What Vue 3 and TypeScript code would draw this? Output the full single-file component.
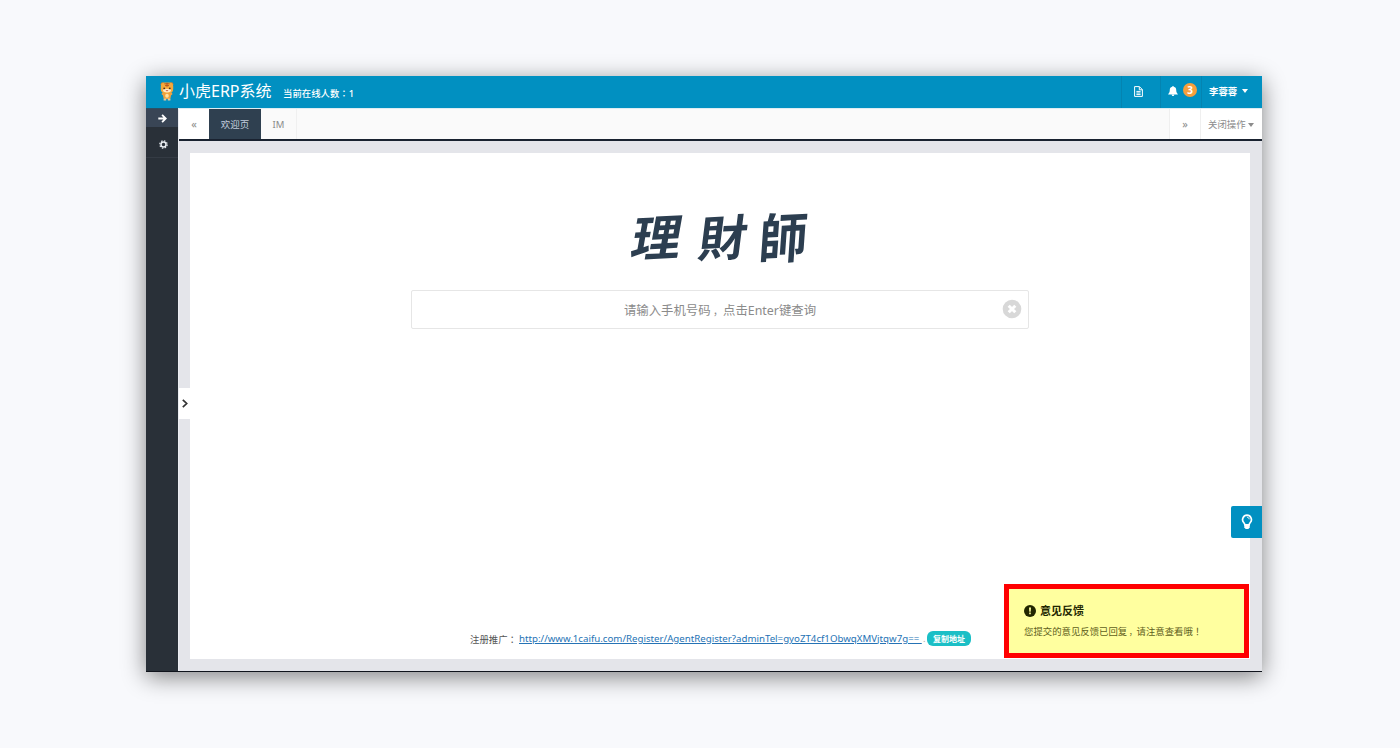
<script setup lang="ts">
import { ref } from 'vue'

interface Tab { label: string; active: boolean }

const tabs = ref<Tab[]>([
  { label: '欢迎页', active: true },
  { label: 'IM', active: false },
])
const notices = ref<number>(3)
const online = ref<number>(1)
const keyword = ref<string>('')
const link = 'http://www.1caifu.com/Register/AgentRegister?adminTel=gyoZT4cf1ObwqXMVjtqw7g=='
</script>

<template>
  <div class="page">
    <div class="window">
      <header class="header">
        <svg class="mascot" viewBox="0 0 14 20">
          <circle cx="2.600" cy="3.200" r="1.900" fill="#d9822b" />
          <circle cx="11.400" cy="3.200" r="1.900" fill="#d9822b" />
          <path d="M2.200 12l2.800 2.500M11.800 12l-2.800 2.500" stroke="#eda54a" stroke-width="2.400" />
          <rect x="3.200" y="10.500" width="7.600" height="7.500" rx="2" fill="#efa03c" />
          <rect x=".8" y="1.600" width="12.400" height="10.400" rx="4" fill="#f5a93a" />
          <path d="M4.400 2.800h5.200M5 4.600h4M7 1.800v4" stroke="#b0501d" stroke-width=".9" />
          <ellipse cx="7" cy="9.600" rx="4" ry="1.800" fill="#ffeccb" />
          <circle cx="4.200" cy="7.300" r=".9" fill="#4a2c1c" />
          <circle cx="9.800" cy="7.300" r=".9" fill="#4a2c1c" />
          <path d="M5.800 9.300q1.200 1.200 2.400 0" stroke="#c33b26" stroke-width=".8" fill="none" />
          <ellipse cx="7" cy="14.800" rx="1.800" ry="2" fill="#ffe0a0" />
          <path d="M3.600 18.500h2.600M7.800 18.500h2.600" stroke="#e5c79c" stroke-width="1.800" />
        </svg>
        <h1 class="brand">小虎ERP系统</h1>
        <span class="online">当前在线人数<span class="mid">：</span>{{ online }}</span>
        <div class="tools">
          <a class="tool doc">
            <svg width="9" height="11" viewBox="0 0 9 11" fill="none" stroke="#fff">
              <path d="M.6.6h4.800l3 3v6.800H.6zM5.300.8v3h3M2.400 5.400h4.200M2.400 7h4.200M2.400 8.600h4.200" stroke-width="1" />
            </svg>
          </a>
          <a class="tool bell">
            <svg width="10" height="10" viewBox="0 0 10 10" fill="#fff">
              <path d="M5 0c.5 0 .8.3.8.8C7.400 1.100 8.200 2.300 8.200 3.800c0 2.100.5 3.200 1.600 4.200v.5H.2V8c1.100-1 1.600-2.100 1.600-4.200 0-1.500.8-2.700 2.400-3C4.200.3 4.500 0 5 0zM3.700 8.800h2.600C6.200 9.600 5.700 10 5 10s-1.200-.4-1.300-1.200z" />
            </svg>
            <span class="badge">{{ notices }}</span>
          </a>
          <a class="tool user">李蓉蓉<i class="caret" /></a>
        </div>
      </header>
      <div class="body">
        <aside class="sidebar">
          <div class="side-item toggle">
            <svg width="9" height="9" viewBox="0 0 9 9" fill="none" stroke="#fff" stroke-width="1.8">
              <path d="M.3 4.500h7M4.100.8l3.700 3.700-3.700 3.700" />
            </svg>
          </div>
          <div class="side-item gear">
            <svg width="9" height="9" viewBox="-4.500 -4.500 9 9" fill="none" stroke="#e8ecf0">
              <circle r="3.700" stroke-width="1.200" stroke-dasharray="1.500 1.406" />
              <circle r="2.500" stroke-width="1.500" />
            </svg>
          </div>
        </aside>
        <main class="main">
          <nav class="tabs">
            <span class="nav-arrow">«</span>
            <span v-for="tab in tabs" :key="tab.label" class="tab" :class="{ active: tab.active }">{{ tab.label }}</span>
            <span class="nav-arrow right">»</span>
            <span class="close-menu">关闭操作<i class="caret" /></span>
          </nav>
          <section class="content">
            <div class="panel">
              <div class="logo"><span class="g1">理</span><span class="g2">財</span><span class="g3">師</span></div>
              <div class="search">
                <span v-if="!keyword">请输入手机号码<span class="comma">，</span>点击Enter键查询</span>
                <svg class="clear" width="20" height="20" viewBox="0 0 20 20">
                  <circle cx="10" cy="10" r="9.300" fill="#d8d8d8" />
                  <path d="M6.700 6.700l6.600 6.600M13.300 6.700l-6.600 6.600" stroke="#fff" stroke-width="3" />
                </svg>
              </div>
              <div class="promo">
                <span class="promo-label">注册推广<span class="mid">：</span></span>
                <a class="url">{{ link }}&nbsp;</a><span class="dot">.</span>
                <button class="copy">复制地址</button>
              </div>
            </div>
            <div class="drawer">
              <svg width="6" height="9" viewBox="0 0 6 9" fill="none" stroke="#333" stroke-width="1.700"><path d="M.8.8l3.900 3.700L.8 8.200" /></svg>
            </div>
            <div class="hint">
              <svg width="12" height="16" viewBox="0 0 12 16">
                <path d="M6 1.200a4.400 4.400 0 0 0-3.300 7.300c.7.800 1.100 1.400 1.200 2.300h4.200c.1-.9.500-1.500 1.200-2.300A4.400 4.400 0 0 0 6 1.200z" fill="none" stroke="#fff" stroke-width="1.700" />
                <path d="M6.200 3.300c1.200.1 1.900.8 2 2" fill="none" stroke="#fff" stroke-width="1" />
                <path d="M3.300 10h5.400v3.500L7.300 15H4.700l-1.400-1.500z" fill="#fff" />
              </svg>
            </div>
            <div class="toast">
              <div class="toast-title">
                <svg width="12" height="12" viewBox="0 0 12 12"><circle cx="6" cy="6" r="6" fill="#222600" /><path d="M5 2.400h2l-.3 4.300H5.300zM5.200 7.600h1.600v1.700H5.200z" fill="#ffff9f" /></svg>
                <strong>意见反馈</strong>
              </div>
              <p>您提交的意见反馈已回复<span class="comma">，</span>请注意查看哦<span class="mid">！</span></p>
            </div>
          </section>
        </main>
      </div>
    </div>
  </div>
</template>

<style>
body { margin: 0; background: #f8f9fc; }
</style>

<style scoped>
* { box-sizing: border-box; }
.page {
  height: 748px; padding: 76px 138px 0 146px; background: #f8f9fc; overflow: hidden;
  font-family: "Noto Sans", "Noto Sans CJK SC", sans-serif; font-size: 9.4px;
}
.mid { font-family: "Noto Sans CJK TC", sans-serif; }
.comma { font-size: .8em; padding-left: .25em; }
.window {
  width: 1116px; height: 596px; display: flex; flex-direction: column;
  border-bottom: 1px solid #10141c; box-shadow: 0 5px 22px rgba(0, 0, 0, .48);
}
.header { height: 32px; flex: none; display: flex; align-items: center; background: #0190c1; color: #fff; padding-left: 14px; }
.mascot { width: 14px; height: 20px; margin-right: 5px; position: relative; top: -1px; }
.brand { margin: 0; width: 104px; font-size: 16px; line-height: 30px; height: 32px; font-weight: 400; white-space: nowrap; }
.online { line-height: 32px; font-weight: 500; padding-top: 2px; white-space: nowrap; }
.tools { display: flex; height: 32px; margin-left: auto; }
.tool { display: flex; align-items: center; border-left: 1px solid #0484b1; }
.doc { width: 39px; padding: 0 0 2px 12px; }
.bell { width: 41px; padding: 0 0 2px 7px; }
.badge {
  width: 14px; height: 14px; margin: -3px 0 0 5px; border-radius: 50%; background: #f89f3c;
  font-size: 10px; line-height: 14px; text-align: center; font-weight: 700;
}
.user { width: 61px; padding: 0 0 2px 7px; font-weight: 700; }
.caret { display: block; border: 3px solid transparent; border-top: 4px solid currentColor; border-bottom: 0; margin-left: 5px; }
.body { flex: 1; display: flex; min-height: 0; }
.sidebar { width: 32px; flex: none; background: #293038; }
.side-item { display: flex; align-items: center; justify-content: center; }
.toggle { height: 19px; background: #394555; border-top: 1px solid #2b5165; }
.gear { height: 31px; padding: 5px 0 0 3px; border-bottom: 1px solid #343b44; }
.main { flex: 1; min-width: 0; display: flex; flex-direction: column; border-left: 1px solid #eceef2; }
.tabs { height: 33px; flex: none; display: flex; border-top: 1px solid #dcecf2; border-bottom: 2px solid #192230; background: #fafafa; color: #8c8c8c; line-height: 31px; }
.nav-arrow { width: 30px; text-align: center; background: #fff; font-size: 11px; line-height: 29px; }
.tab { width: 36px; text-align: center; border-right: 1px solid #f0f0f0; font-size: 9.500px; }
.tab.active { width: 52px; background: #2f4050; color: #c1cddd; border: 0; }
.nav-arrow.right { margin-left: auto; width: 31px; border-left: 1px solid #efefef; }
.close-menu { width: 62px; padding: 1px 0 0 7px; border-left: 1px solid #efefef; background: #fff; display: flex; align-items: center; white-space: nowrap; }
.close-menu .caret { margin-left: 2px; }
.content { position: relative; flex: 1; padding: 12px 12px 12px 11px; background: #e4e5ea; }
.panel { height: 506px; background: #fff; display: flex; flex-direction: column; align-items: center; }
.logo {
  height: 73px; margin-top: 49px; width: 180px; display: flex; justify-content: space-between;
  font-family: "Noto Sans CJK TC", sans-serif; font-weight: 700; font-size: 51px; line-height: 66px; color: #2c3e50;
}
.logo span { display: block; width: 51px; height: 66px; }
.g1 { transform: translateX(2px) skewX(-13deg) rotate(-3deg) scale(.97); }
.g2 { transform: translateX(3px) skewX(-10deg) rotate(-3deg) scale(.95, .96); }
.g3 { transform: translateX(-1px) skewX(-7deg) rotate(-3deg) scale(.95, 1.060); }
.search {
  width: 618px; height: 39px; margin-top: 15px; border: 1px solid #e6e6e6; border-radius: 2px; position: relative;
  display: flex; align-items: center; justify-content: center; font-size: 12.400px; color: #8b8b8b;
}
.clear { position: absolute; right: 6px; top: 8px; }
.promo { margin-top: auto; margin-bottom: 12px; height: 17px; width: 502px; display: flex; align-items: center; white-space: nowrap; color: #555; }
.promo-label { width: 50px; padding-left: 1px; }
.url { color: #2573b5; text-decoration: underline; width: 404px; font-size: 9.700px; }
.dot { color: #aaa; }
.copy {
  width: 44px; height: 15px; margin-left: auto; padding: 0; border: 0; border-radius: 6px; background: #1bbfc6; color: #fff;
  font: 700 8px/15px "Noto Sans CJK SC", sans-serif;
}
.drawer { position: absolute; left: 0; top: 247px; width: 12px; height: 31px; background: #fff; display: flex; align-items: center; padding-left: 3px; }
.hint { position: absolute; right: 0; top: 365px; width: 31px; height: 32px; background: #0190c1; border-radius: 2px 0 0 2px; display: flex; align-items: center; justify-content: center; }
.toast { position: absolute; left: 825px; top: 443px; width: 245px; height: 74px; border: 5px solid #f00; background: #ffff9f; padding: 12px 0 0 15px; color: #3e4010; }
.toast-title { display: flex; align-items: center; gap: 4px; height: 17px; font-size: 11px; color: #222600; }
.toast-title svg { position: relative; top: 1px; }
.toast p { margin: 6px 0 0; line-height: 14px; white-space: nowrap; color: #606020; }
</style>
